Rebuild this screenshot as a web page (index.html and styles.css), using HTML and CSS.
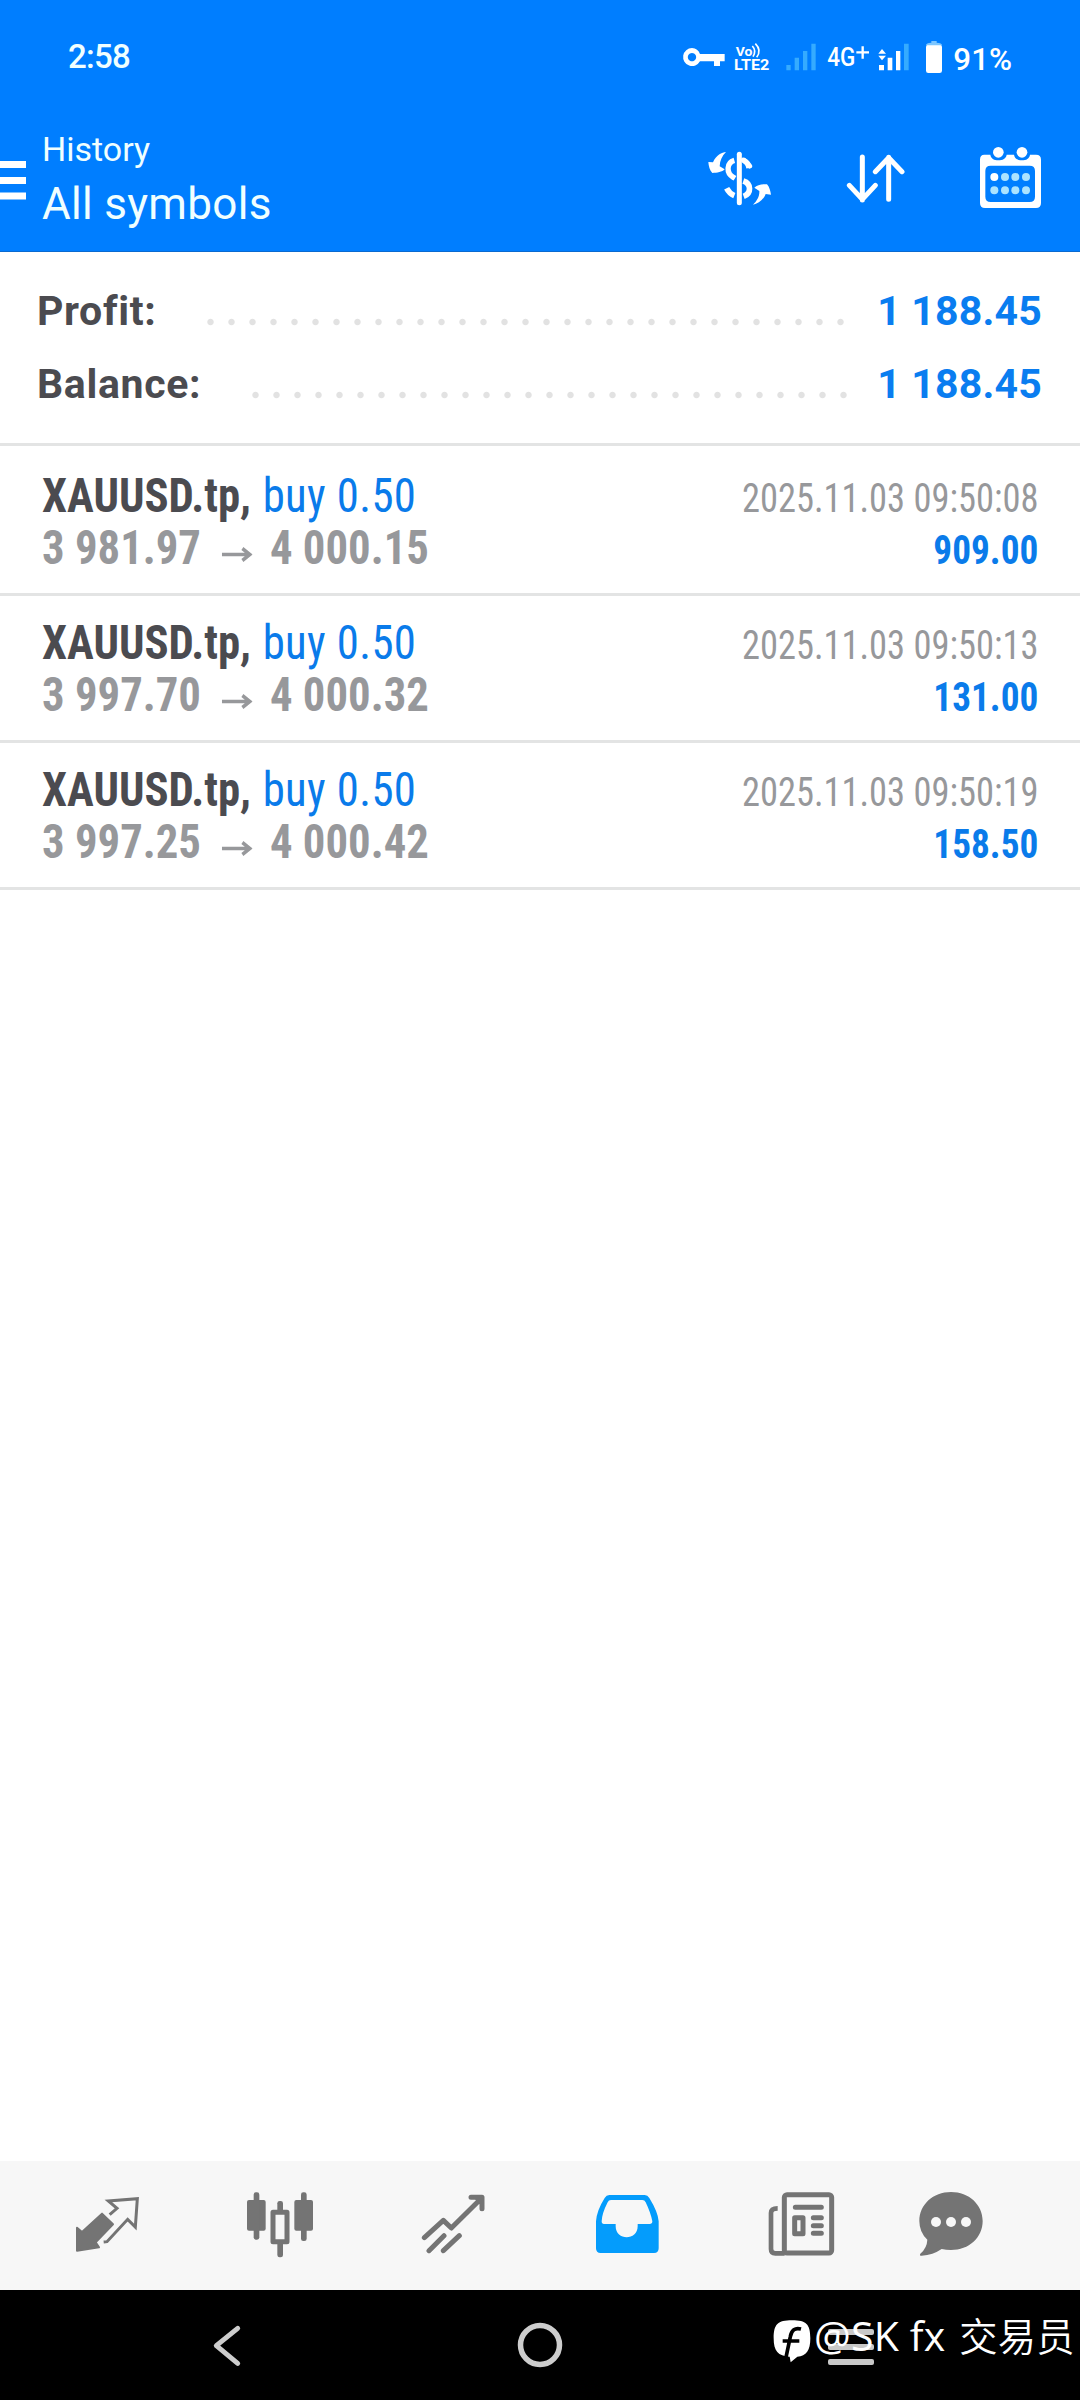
FILE: index.html
```html
<!DOCTYPE html>
<html lang="en">
<head>
<meta charset="utf-8">
<title>History</title>
<link rel="stylesheet" href="styles.css">
</head>
<body>
<div class="screen">
  <header class="header">
    <div class="status">
      <span class="clock">2:58</span>
      <svg class="status-icons" width="420" height="80" viewBox="0 0 1260 240">
        <g fill="#fff">
          <path fill-rule="evenodd" d="M96 84a27 27 0 1 0 24 40h42v14h18v-14h14v-22h-74a27 27 0 0 0-24-18zm0 15a12.500 12.500 0 1 1-.1 0z"/>
          <text class="volte" x="227" y="108" textLength="50" lengthAdjust="spacingAndGlyphs">Vo</text>
          <path d="M277 78q13 14 2 32M286 71q20 20 4 41" fill="none" stroke="#fff" stroke-width="5"/>
          <text class="volte lte" x="222" y="151" textLength="106" lengthAdjust="spacingAndGlyphs">LTE2</text>
          <text class="net" x="502" y="139" textLength="84" lengthAdjust="spacingAndGlyphs">4G</text>
          <path d="M589 97h38M608 79v37" fill="none" stroke="#fff" stroke-width="7"/>
          <path d="M657 135h15v16h-15zM683 113h14v38h-14zM708 93h13v58h-13zM655 101l11-14 12 14zM655 107h23l-12 14z"/>
          <rect x="798" y="74" width="48" height="85" rx="7"/>
          <text class="pct" x="880" y="150" textLength="176" lengthAdjust="spacingAndGlyphs">91%</text>
        </g>
        <path fill="#35abff" d="M379 135h13v16h-13zM404 113h13v38h-13zM429 93h13v58h-13zM454 71h13v80h-13zM732 71h14v80h-14z"/>
        <path fill="#7cc6ff" d="M798 76q0-8 16-8v-5h16v5q16 0 16 8z"/>
      </svg>
    </div>
    <div class="appbar">
      <svg class="burger" width="26" height="39" viewBox="0 0 26 39"><path fill="#fff" d="M0 0h26v7H0zM0 16h26v7H0zM0 31.500h26v7H0z"/></svg>
      <div class="titles">
        <div class="subtitle">History</div>
        <div class="title">All symbols</div>
      </div>
      <div class="actions">
        <svg class="money" width="65" height="57" viewBox="81 90 195 171">
          <g fill="none" stroke="#fff" stroke-linecap="butt">
            <path d="M178 103v145" stroke-width="15" stroke-linecap="round"/>
            <path d="M163 121c-24 7-25 38-3 51l5 3M190 120q14 8 17 24" stroke-width="16"/>
            <path d="M190 183c24 8 25 37 1 46M163 227q-15-6-23-22" stroke-width="17"/>
            <path d="M190 120q12 7 19 18" stroke-width="15" stroke-linecap="round"/>
          </g>
          <g fill="#fff">
            <path d="M138 96c-12 1-30 9-39 31l-14-1c1 12 4 26 12 33 14 0 30-3 37-11l-15-9c1-18 7-31 19-43z"/>
            <path d="M219 254c14-3 31-13 38-32l16 2c-2-11-4-22-12-31-14-2-30 2-38 10l15 10c1 16-7 29-19 41z"/>
          </g>
        </svg>
        <svg class="sort" width="60" height="51" viewBox="498 99 180 153">
          <path d="M547 111v129M508 196l39 42 39-42M626 238V112M586 155l40-42 40 42" fill="none" stroke="#fff" stroke-width="15" stroke-linecap="round" stroke-linejoin="round"/>
        </svg>
        <svg width="63" height="63" viewBox="897 78 189 189">
          <path fill="#fff" fill-rule="evenodd" d="M913 104h18c2 12 11 17 24 17s23-5 25-17h22c2 12 11 17 24 17s22-5 24-17h18q15 0 15 15v130q0 15-15 15H915q-15 0-15-15V119q0-15 13-15zm19 33q-16 0-16 16v77q0 16 16 16h117q16 0 16-16v-77q0-16-16-16z"/>
          <g fill="#fff"><circle cx="955" cy="97" r="16"/><circle cx="1026" cy="97" r="16"/><circle cx="943" cy="171" r="12"/></g>
          <g fill="#abe3ff"><circle cx="975" cy="171" r="12"/><circle cx="1006" cy="171" r="12"/><circle cx="1038" cy="171" r="12"/><circle cx="943" cy="211" r="12"/><circle cx="975" cy="211" r="12"/><circle cx="1006" cy="211" r="12"/><circle cx="1038" cy="211" r="12"/></g>
        </svg>
      </div>
    </div>
  </header>

  <section class="summary">
    <div class="sum-row"><span class="sum-label">Profit:</span><span class="dots dots-profit"></span><span class="sum-value">1 188.45</span></div>
    <div class="sum-row"><span class="sum-label">Balance:</span><span class="dots dots-balance"></span><span class="sum-value">1 188.45</span></div>
  </section>

  <main class="deals">
    <article class="deal">
      <div class="left">
        <div class="line"><b class="symbol">XAUUSD.tp,</b> <span class="side">buy 0.50</span></div>
        <div class="line price"><span>3 981.97</span><svg class="arrow" width="33" height="15" viewBox="0 0 33 15"><path d="M0 7.500h29M22 1.500l8 6-8 6" fill="none" stroke="#97989b" stroke-width="3.600"/></svg><span>4 000.15</span></div>
      </div>
      <div class="right"><div class="date">2025.11.03 09:50:08</div><div class="amount">909.00</div></div>
    </article>
    <article class="deal">
      <div class="left">
        <div class="line"><b class="symbol">XAUUSD.tp,</b> <span class="side">buy 0.50</span></div>
        <div class="line price"><span>3 997.70</span><svg class="arrow" width="33" height="15" viewBox="0 0 33 15"><path d="M0 7.500h29M22 1.500l8 6-8 6" fill="none" stroke="#97989b" stroke-width="3.600"/></svg><span>4 000.32</span></div>
      </div>
      <div class="right"><div class="date">2025.11.03 09:50:13</div><div class="amount">131.00</div></div>
    </article>
    <article class="deal">
      <div class="left">
        <div class="line"><b class="symbol">XAUUSD.tp,</b> <span class="side">buy 0.50</span></div>
        <div class="line price"><span>3 997.25</span><svg class="arrow" width="33" height="15" viewBox="0 0 33 15"><path d="M0 7.500h29M22 1.500l8 6-8 6" fill="none" stroke="#97989b" stroke-width="3.600"/></svg><span>4 000.42</span></div>
      </div>
      <div class="right"><div class="date">2025.11.03 09:50:19</div><div class="amount">158.50</div></div>
    </article>
  </main>

  <nav class="tabs">
    <svg width="67" height="58" viewBox="222 138 201 174">
      <path fill="#747474" stroke="#747474" stroke-width="6" stroke-linejoin="round" d="M306 194l33 32-52 54 10 15-66 10v-69l15 13z"/>
      <path fill="none" stroke="#747474" stroke-width="9" d="M329 197l22-19-26-22 87-7-6 85-23-23-62 67-10 1"/>
    </svg>
    <svg width="68" height="67" viewBox="738 123 204 201">
      <g fill="#747474"><rect x="741" y="150" width="56" height="92" rx="6"/><rect x="761" y="127" width="17" height="142" rx="7"/><rect x="883" y="150" width="56" height="92" rx="6"/><rect x="903" y="127" width="17" height="146" rx="7"/><rect x="832" y="153" width="17" height="35" rx="7"/><rect x="832" y="275" width="17" height="47" rx="7"/></g>
      <rect x="819" y="187" width="42" height="88" fill="none" stroke="#747474" stroke-width="15" stroke-linejoin="round"/>
    </svg>
    <svg width="65" height="60" viewBox="183 132 195 180">
      <path d="M193 263l57-52 24 23 88-87M333 142h33v34M207 302l45-45M250 302l48-45" fill="none" stroke="#747474" stroke-width="15" stroke-linecap="round" stroke-linejoin="round"/>
      <path fill="#747474" d="M340 142h26v28z"/>
    </svg>
    <svg width="66" height="60" viewBox="702 132 198 180">
      <path fill="#049cfc" fill-rule="evenodd" d="M748 135h106q9 0 14 9 26 42 28 70v81q0 14-14 14H722q-14 0-14-14v-81q2-32 26-70 5-9 14-9zm5 15q-7 0-10 7-17 33-18 57 0 8 7 8h35v7c0 44 66 44 66 0v-7h36q8 0 8-8-5-26-20-57-3-7-10-7z"/>
    </svg>
    <svg width="67" height="66" viewBox="144 123 201 198">
      <rect x="193" y="134" width="142" height="175" rx="8" fill="none" stroke="#747474" stroke-width="15"/>
      <path d="M173 175q-20 0-20 14v108q0 13 13 13h28" fill="none" stroke="#747474" stroke-width="14"/>
      <path d="M226 172h78M280 203h24M280 227h24M280 250h24" stroke="#747474" stroke-width="15" stroke-linecap="round"/>
      <rect x="224" y="203" width="25" height="48" fill="none" stroke="#747474" stroke-width="15" stroke-linejoin="round"/>
    </svg>
    <svg width="66" height="66" viewBox="594 123 198 198">
      <path fill="#747474" d="M693 126c54 0 95 38 95 87 0 50-41 87-95 87q-15 0-28-3-26 18-60 20-8 0-4-6 20-17 21-42-24-22-24-56c0-49 41-87 95-87z"/>
      <g fill="#f7f7f7"><circle cx="648" cy="216" r="15"/><circle cx="693" cy="216" r="15"/><circle cx="738" cy="216" r="15"/></g>
    </svg>
  </nav>

  <footer class="sysnav">
    <svg class="back" width="30" height="45" viewBox="636 516 90 135"><path d="M713 532l-64 52 64 53" fill="none" stroke="#cdcdcd" stroke-width="15" stroke-linecap="round" stroke-linejoin="round"/></svg>
    <svg class="home" width="46" height="46" viewBox="0 0 46 46"><circle cx="23" cy="23" r="19.500" fill="none" stroke="#cdcdcd" stroke-width="5.500"/></svg>
    <svg class="recent" width="46" height="36" viewBox="0 0 46 36"><g fill="#c8c8c8"><rect width="46" height="6" rx="2"/><rect y="15" width="46" height="6" rx="2"/><rect y="30" width="46" height="6" rx="2"/></g></svg>
    <div class="watermark">
      <svg width="38" height="43" viewBox="159 510 114 129">
        <path fill="#fff" d="M216 511c43 0 55 12 55 54 0 36-12 54-39 55l-20 17-3-17c-35-1-48-17-48-55 0-42 12-54 55-54z"/>
        <path d="M243 537q-27-7-32 23l-13 62M188 573h50" fill="none" stroke="#000" stroke-width="11"/>
      </svg>
      <span class="handle">@SK fx <span class="han">交易员</span></span>
    </div>
  </footer>
</div>
</body>
</html>
```
FILE: styles.css
```css
* { box-sizing: border-box; }
body { margin: 0; background: #fff; font-family: Roboto, sans-serif; }
svg { display: block; flex: none; }
.screen { width: 1080px; height: 2400px; display: flex; flex-direction: column; overflow: hidden; }

.header { height: 252px; background: #007eff; color: #f0ffff; border-bottom: 1px solid #0a6ad0; }
.status { height: 114px; display: flex; justify-content: space-between; padding-left: 68px; }
.clock { font-size: 33px; line-height: 114px; font-weight: 500; letter-spacing: -0.700px; }
.status-icons { margin-top: 20px; }
.volte { font-size: 37px; font-weight: 700; }
.lte { font-size: 42px; }
.net { font-size: 80px; font-weight: 500; }
.pct { font-size: 96px; font-weight: 500; }
.appbar { height: 137px; display: flex; align-items: flex-start; padding: 12px 38px 0 0; }
.burger { margin-top: 35px; }
.titles { margin-left: 16px; flex: 1; }
.subtitle { font-size: 34px; line-height: 47px; }
.title { font-size: 44px; line-height: 62px; letter-spacing: 0.300px; }
.actions { display: flex; align-items: center; height: 63px; margin-top: 20px; }
.money { margin: 2px 74px 0 0; }
.sort { margin: 2px 73px 0 0; }

.summary { height: 194px; padding: 23px 38px 0 37px; border-bottom: 3px solid #e3e4e4; }
.sum-row { height: 73px; line-height: 73px; display: flex; font-size: 41px; font-weight: 700; }
.sum-label { color: #4b4b50; letter-spacing: 0.650px; }
.sum-value { color: #0a7df0; margin-left: auto; letter-spacing: 0.200px; }
.dots { height: 8px; margin-top: 43px; background: radial-gradient(circle at 10.5px 4px, #e2e2e2 2.700px, transparent 3.700px) 0 0 / 21px 8px repeat-x; }
.dots-profit { width: 651px; margin-left: 44px; }
.dots-balance { width: 609px; margin-left: 44px; }

.deals { flex: 1; padding-top: 3px; font-family: "Roboto Condensed", Roboto, sans-serif; font-stretch: 75%; }
.deal { height: 147px; border-bottom: 3px solid #e3e4e4; display: flex; justify-content: space-between; padding: 21px 42px 0; }
.left { transform: scaleX(0.932); transform-origin: left top; }
.line { font-size: 48px; line-height: 52px; height: 52px; white-space: nowrap; }
.symbol { color: #4b4b50; }
.side { color: #0a7bea; margin-left: 1.500px; letter-spacing: 0.400px; }
.price { display: flex; color: #97989b; font-weight: 700; }
.arrow { margin: 25px 19px 0 22px; }
.right { text-align: right; margin-top: 3px; font-size: 40px; line-height: 52px; white-space: nowrap; }
.date { color: #97989b; transform: scaleX(0.911); transform-origin: right top; }
.amount { color: #0a7bea; font-weight: 700; transform: scaleX(0.932); transform-origin: right top; }

.tabs { height: 129px; background: #f7f7f7; display: grid; grid-template-columns: 173px 172px 175px 172px 177px 122px; padding: 0 0 3px 21px; align-items: center; justify-items: center; }
.sysnav { height: 110px; background: #000; position: relative; display: flex; align-items: center; padding-left: 212px; }
.home { margin-left: 275px; }
.recent { margin: 3px 0 0 265px; }
.watermark { position: absolute; left: 773px; top: 30px; display: flex; gap: 3px; color: #fff; }
.handle { font: 380 41px/46px "Open Sans", "Noto Sans CJK SC", sans-serif; letter-spacing: 0.200px; white-space: nowrap; margin-top: -8px; }
.han { font: 350 38.3px/40px "Noto Sans CJK SC", sans-serif; margin-left: 3px; }
```
